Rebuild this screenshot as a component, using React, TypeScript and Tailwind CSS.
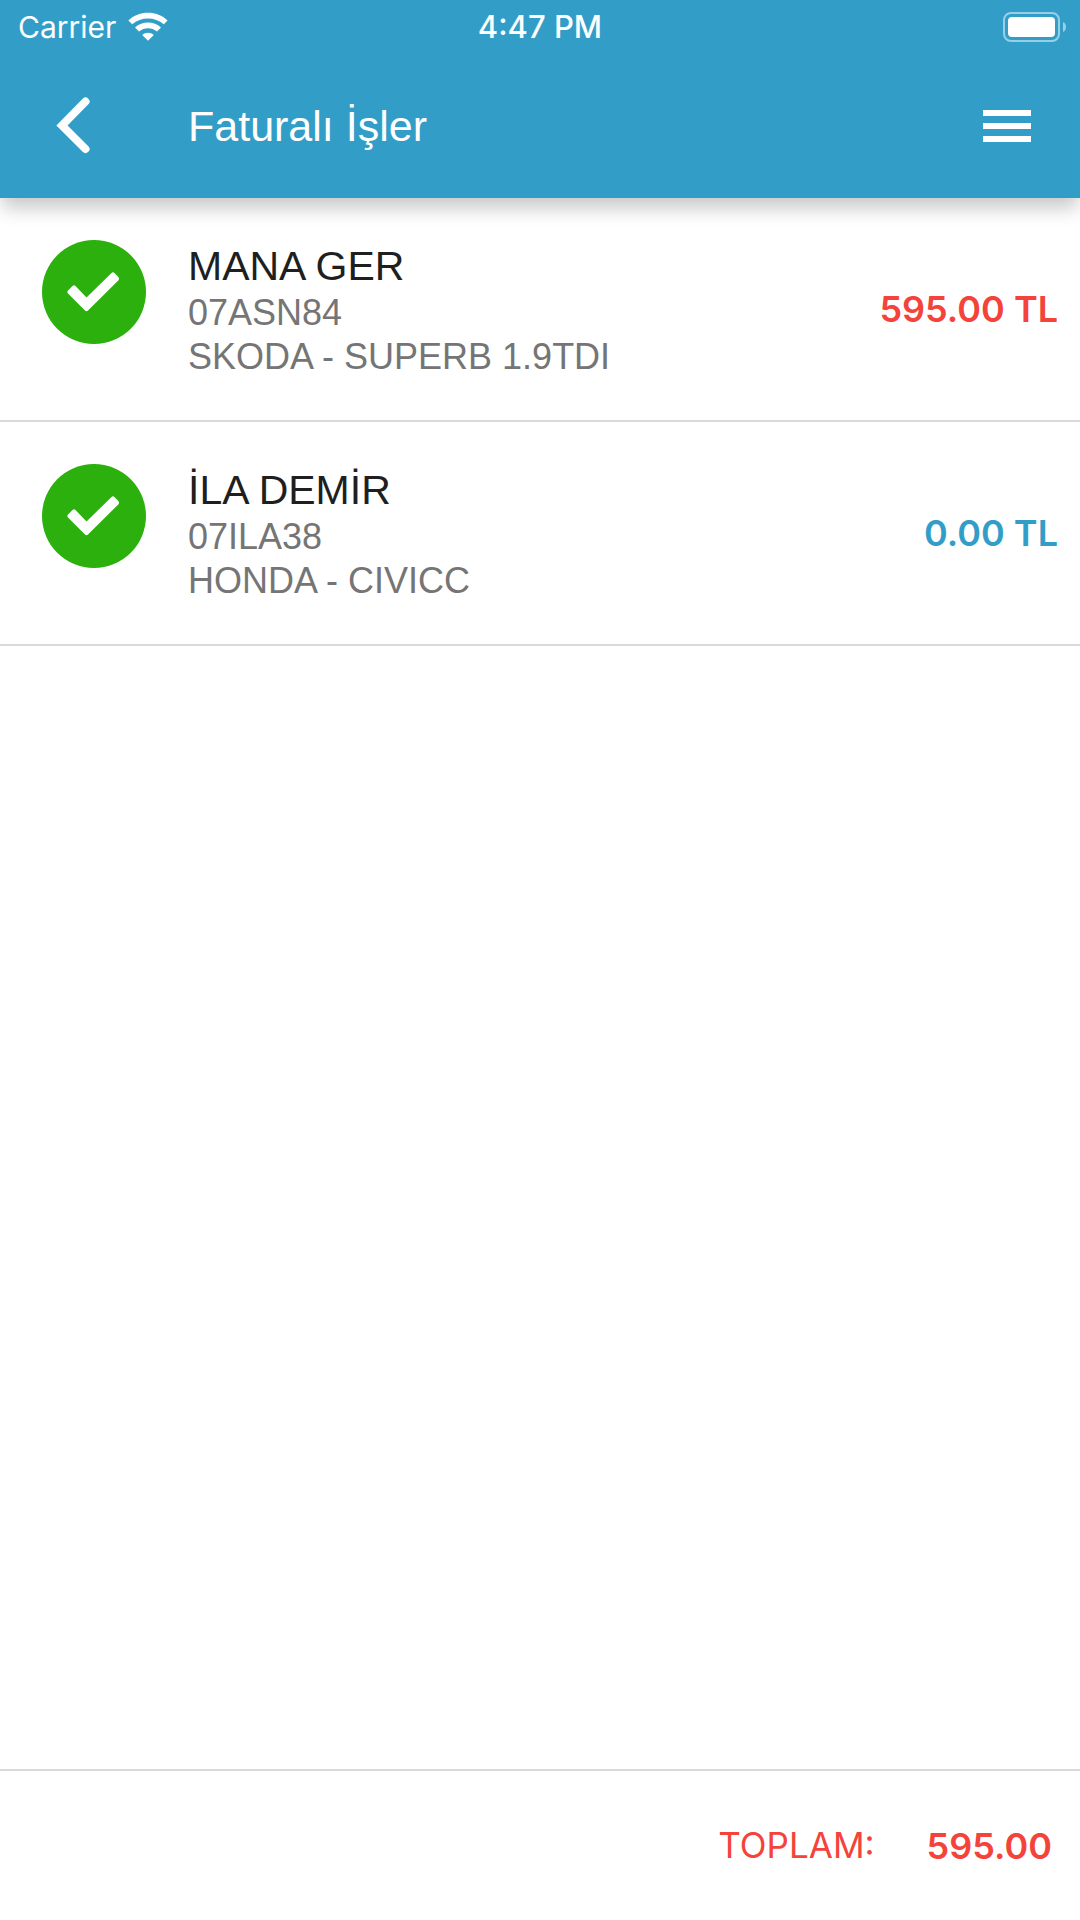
import React from "react";

type Job = {
  customer: string;
  plate: string;
  vehicle: string;
  amount: string;
  due: boolean;
};

const jobs: Job[] = [
  { customer: "MANA GER", plate: "07ASN84", vehicle: "SKODA - SUPERB 1.9TDI", amount: "595.00 TL", due: true },
  { customer: "İLA DEMİR", plate: "07ILA38", vehicle: "HONDA - CIVICC", amount: "0.00 TL", due: false },
];

function WifiIcon() {
  return (
    <svg viewBox="0 0 40 30" className="h-[30px] w-10" fill="none" aria-hidden="true">
      <path d="M0.4 8.400C11 -1.900 29 -1.900 39.600 8.400L35.800 12.300C27 4.600 13 4.600 4.200 12.300Z" fill="#fff" />
      <path d="M7 15.600C14 8.900 26 8.900 33 15.600L29 19.500C24 15 16 15 11 19.500Z" fill="#fff" />
      <path d="M14.200 22.900C17.500 19.900 22.500 19.900 25.800 22.900L20 28.800Z" fill="#fff" />
    </svg>
  );
}

function BatteryIcon() {
  return (
    <svg viewBox="0 0 64 30" className="h-[30px] w-16" fill="none" aria-hidden="true">
      <rect x="2" y="1" width="55" height="28" rx="7" stroke="#fff" strokeOpacity="0.5" strokeWidth="2" />
      <rect x="6" y="5" width="47" height="20" rx="4" fill="#fff" />
      <path d="M61 10C65 11.500 65 18.500 61 20Z" fill="#fff" fillOpacity="0.5" />
    </svg>
  );
}

function StatusBar() {
  return (
    <div className="grid h-[54px] grid-cols-3 items-center px-[14px] font-['Inter',sans-serif]">
      <div className="flex items-center gap-3 pl-1 text-[30px] leading-9">
        <span>Carrier</span>
        <WifiIcon />
      </div>
      <span className="text-center text-[31px] leading-9 font-medium">4:47 PM</span>
      <div className="flex justify-end">
        <BatteryIcon />
      </div>
    </div>
  );
}

function Header() {
  return (
    <header className="relative shrink-0 bg-[#329ec8] text-white shadow-[0_12px_18px_-2px_rgba(0,0,0,0.22)]">
      <StatusBar />
      <div className="flex h-36 items-center pr-[49px]">
        <button type="button" aria-label="Geri" className="flex h-full w-[188px] items-center pl-[54px]">
          <svg viewBox="0 0 38 60" className="h-[60px] w-[38px]" fill="none" aria-hidden="true">
            <path d="M31.500 5.500L8 29.500L31.500 53" stroke="#fff" strokeWidth="8" strokeLinecap="round" strokeLinejoin="miter" />
          </svg>
        </button>
        <h1 className="flex-1 text-[43px] leading-[52px]">Faturalı İşler</h1>
        <button type="button" aria-label="Menü" className="flex flex-col gap-[7px]">
          <span className="h-[6px] w-12 bg-white" />
          <span className="h-[6px] w-12 bg-white" />
          <span className="h-[6px] w-12 bg-white" />
        </button>
      </div>
    </header>
  );
}

function CheckBadge() {
  return (
    <div className="flex size-[104px] shrink-0 items-center justify-center rounded-full bg-[#2cb00d]">
      <svg viewBox="0 0 54 40" className="h-10 w-[54px]" aria-hidden="true">
        <path
          d="M1 18.500L5.500 14Q7 12.700 8.500 14L19.500 25.500L44.500 1Q46 -0.300 47.500 1L51.500 5.300Q52.600 6.800 51.500 8.200L21 38.500Q19.500 39.800 18 38.500L1 21.500Q-0.300 20 1 18.500Z"
          fill="#fff"
        />
      </svg>
    </div>
  );
}

function JobRow({ job }: { job: Job }) {
  return (
    <li className="flex h-56 items-center border-b-2 border-[#dadada] pr-[22px] pl-[42px]">
      <div className="self-start pt-[42px] pr-[42px]">
        <CheckBadge />
      </div>
      <div className="flex-1 pt-0.5">
        <h2 className="text-[41px] leading-[50px] text-[#1f1f1f]">{job.customer}</h2>
        <p className="text-[36px] leading-[44px] text-[#757575]">{job.plate}</p>
        <p className="text-[36px] leading-[44px] text-[#757575]">{job.vehicle}</p>
      </div>
      <span
        className={
          job.due
            ? "font-['Inter',sans-serif] text-4xl font-semibold text-[#f4433a]"
            : "font-['Inter',sans-serif] text-4xl font-semibold text-[#329ec8]"
        }
      >
        {job.amount}
      </span>
    </li>
  );
}

export default function App() {
  return (
    <div className="flex min-h-screen flex-col bg-white font-['Liberation_Sans',sans-serif]">
      <Header />
      <main className="flex-1">
        <ul>
          {jobs.map((job) => (
            <JobRow key={job.plate} job={job} />
          ))}
        </ul>
      </main>
      <footer className="flex h-[151px] items-center justify-end gap-[52px] border-t-2 border-[#dadada] pr-7 font-['Inter',sans-serif] text-[#f4433a]">
        <span className="text-[35px]">TOPLAM:</span>
        <span className="text-4xl font-semibold">595.00</span>
      </footer>
    </div>
  );
}
